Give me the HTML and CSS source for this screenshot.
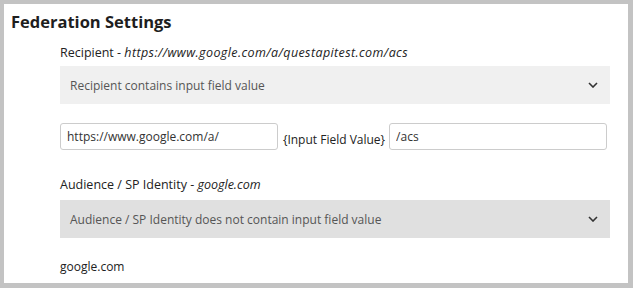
FILE: index.html
```html
<!DOCTYPE html>
<html lang="en">
<head>
    <meta charset="UTF-8">
    <meta name="viewport" content="width=device-width, initial-scale=1.0">
    <title>Federation Settings</title>
    <link rel="stylesheet" href="styles.css">
</head>
<body>
    <div class="panel">
        <h2>Federation Settings</h2>
        <div class="fields">
            <div class="label">Recipient - <em class="url">https://www.google.com/a/questapitest.com/acs</em></div>
            <div class="select">
                <span>Recipient contains input field value</span>
                <svg width="10" height="6" viewBox="0 0 10 6"><path d="M1 1l4 4 4-4" fill="none" stroke="#333" stroke-width="1.6"/></svg>
            </div>
            <div class="input-row">
                <input type="text" value="https://www.google.com/a/">
                <span class="joiner">{Input Field Value}</span>
                <input type="text" value="/acs">
            </div>
            <div class="label">Audience / SP Identity - <em>google.com</em></div>
            <div class="select disabled">
                <span>Audience / SP Identity does not contain input field value</span>
                <svg width="10" height="6" viewBox="0 0 10 6"><path d="M1 1l4 4 4-4" fill="none" stroke="#333" stroke-width="1.6"/></svg>
            </div>
            <div class="value">google.com</div>
        </div>
    </div>
</body>
</html>
```

FILE: styles.css
```css
html, body {
    margin: 0;
    height: 100%;
}
body {
    background: #c3c3c3;
    padding: 4px 5px 5px 4px;
    box-sizing: border-box;
    font-family: "Open Sans", sans-serif;
    font-size: 12px;
    color: #222;
}
.panel {
    background: white;
    height: 100%;
    padding: 6px 18px 0 7px;
    box-sizing: border-box;
}
h2 {
    margin: 0;
    font-size: 16.5px;
    font-weight: bold;
    color: #1e1e1e;
    line-height: 24px;
}
.fields {
    padding-left: 49px;
}
.label {
    margin-top: 11px;
    line-height: 16px;
    font-size: 12.5px;
}
.url {
    letter-spacing: 0.4px;
}
.select {
    display: flex;
    justify-content: space-between;
    align-items: center;
    height: 38px;
    margin-top: 5px;
    padding: 0 12px 0 10px;
    background: #f0f0f0;
    color: #555;
}
.select.disabled {
    margin-top: 7px;
    background: #e0e0e0;
}
.input-row {
    display: flex;
    align-items: center;
    margin-top: 19px;
    margin-right: 3px;
    margin-bottom: 27px;
}
.input-row input {
    flex: 1;
    height: 27px;
    box-sizing: border-box;
    padding: 0 6px;
    border: 1px solid #ccc;
    border-radius: 3px;
    font-family: inherit;
    font-size: 12px;
    color: #333;
}
.joiner {
    padding: 6px 4px 0 5px;
}
.value {
    margin-top: 20px;
}
```
